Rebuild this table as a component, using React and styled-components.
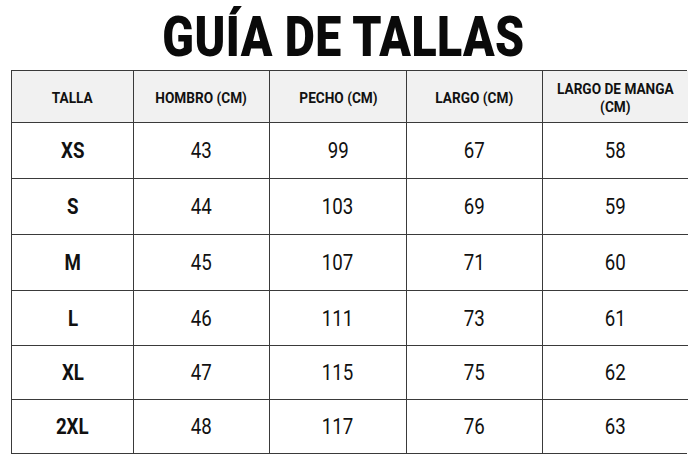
import React from "react";
import styled, { createGlobalStyle } from "styled-components";

const Global = createGlobalStyle`
  html, body { margin: 0; padding: 0; background: #fff; }
  body { font-family: Roboto, "Liberation Sans", sans-serif; color: #111; }
`;

const Page = styled.div`
  width: 700px;
  height: 467px;
  box-sizing: border-box;
  padding: 8px 13px 0 11px;
  display: flex;
  flex-direction: column;
  align-items: stretch;
`;

const Title = styled.h1`
  margin: 0;
  height: 62px;
  padding-right: 13px;
  text-align: center;
  font-family: Roboto, sans-serif;
  font-weight: 900;
  font-size: 55px;
  line-height: 58px;
  letter-spacing: 0.5px;
  transform: scaleX(0.845);
  color: #0a0a0a;
`;

const Table = styled.div`
  display: grid;
  grid-template-columns: 122px 136px 137px 136px 145px;
  grid-template-rows: 52px 56px 56px 56px 55px 54px 53px;
  border: 1.5px solid #3a3a3a;
  width: 676px;
  box-sizing: border-box;
`;

const Cell = styled.div`
  display: flex;
  align-items: center;
  justify-content: center;
  text-align: center;
  padding-top: ${p => (p.$head ? "3px" : "0")};
  box-sizing: border-box;
  border-right: ${p => (p.$last ? "none" : "1.5px solid #3a3a3a")};
  border-bottom: ${p => (p.$lastRow ? "none" : "1.5px solid #3a3a3a")};
  background: ${p => (p.$head ? "#f1f1f1" : "#fff")};
  font-family: Roboto, sans-serif;
`;

const HeadText = styled.span`
  font-weight: 700;
  font-size: 15.5px;
  display: flex;
  flex-direction: column;
  align-items: center;
  white-space: nowrap;
  transform: scaleX(0.88);
  color: #111;
`;

const HeadLine = styled.span`
  display: block;
  height: 18.5px;
  line-height: 18.5px;
`;

const SizeText = styled.span`
  font-weight: 700;
  font-size: 22px;
  display: inline-block;
  transform: scaleX(0.85);
  color: #111;
`;

const NumText = styled.span`
  font-weight: 400;
  font-size: 22px;
  display: inline-block;
  transform: scaleX(0.85);
  color: #111;
`;

const headers = [["TALLA"], ["HOMBRO (CM)"], ["PECHO (CM)"], ["LARGO (CM)"], ["LARGO DE MANGA", "(CM)"]];
const rows = [
  ["XS", 43, 99, 67, 58],
  ["S", 44, 103, 69, 59],
  ["M", 45, 107, 71, 60],
  ["L", 46, 111, 73, 61],
  ["XL", 47, 115, 75, 62],
  ["2XL", 48, 117, 76, 63],
];

export default function App() {
  return (
    <>
      <Global />
      <Page>
        <Title>GUÍA DE TALLAS</Title>
        <Table>
          {headers.map((h, i) => (
            <Cell key={i} $head $last={i === 4}>
              <HeadText>
                {h.map((l, j) => (
                  <HeadLine key={j}>{l}</HeadLine>
                ))}
              </HeadText>
            </Cell>
          ))}
          {rows.map((r, ri) =>
            r.map((v, ci) => (
              <Cell key={`${ri}-${ci}`} $last={ci === 4} $lastRow={ri === rows.length - 1}>
                {ci === 0 ? <SizeText>{v}</SizeText> : <NumText>{v}</NumText>}
              </Cell>
            ))
          )}
        </Table>
      </Page>
    </>
  );
}
